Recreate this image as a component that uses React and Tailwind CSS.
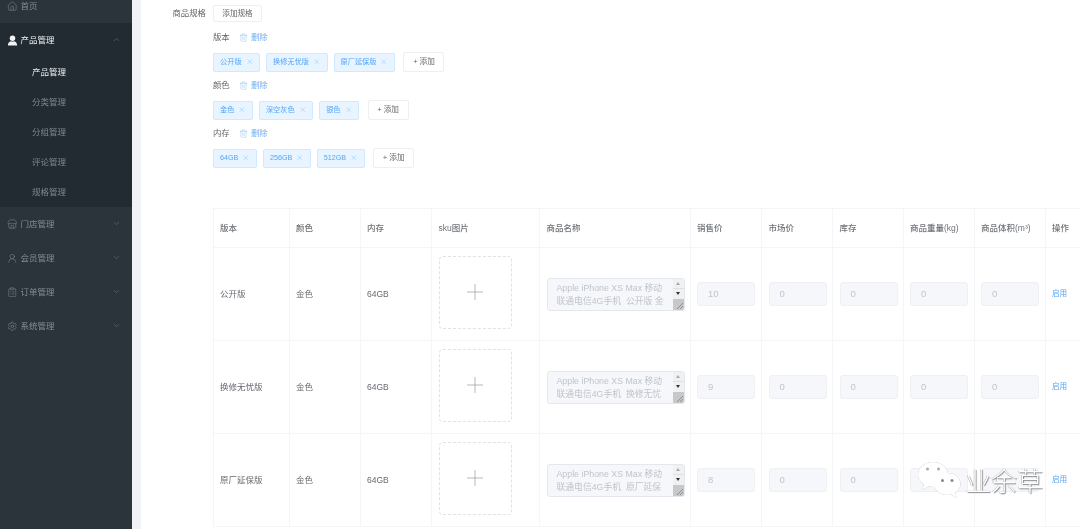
import React from "react";
import { Home, Store, UserRound, ClipboardList, Settings, ChevronUp, ChevronDown, Trash2, X, Plus } from "lucide-react";

const font = { fontFamily: '"Liberation Sans", "Noto Sans CJK SC", sans-serif' };

function MenuItem({ icon: Icon, label, noArrow }) {
  return (
    <div className="flex h-[34px] items-center pl-[5px] pr-[11px] text-[#868d93]">
      <div className="flex w-[15px] justify-center">
        <Icon size={10.5} strokeWidth={1.2} />
      </div>
      <span className="ml-[0.5px] text-[8.5px]">{label}</span>
      {!noArrow && <ChevronDown size={9} strokeWidth={1.1} className="ml-auto -translate-y-[1px]" />}
    </div>
  );
}

function SolidUser({ size }) {
  return (
    <svg width={size} height={size} viewBox="0 0 10 10" fill="#f0f2f3">
      <circle cx="5" cy="2.900" r="2.500" />
      <path d="M.8 9.600c0-2.600 1.400-3.800 2.600-4 .9.500 2.300.500 3.200 0 1.200.2 2.600 1.400 2.600 4z" />
    </svg>
  );
}

function Tag({ children }) {
  return (
    <span className="flex h-[19px] items-center gap-[4px] rounded-[2px] border border-[#d1e9ff] bg-[#e8f4ff] px-[6px] text-[7.2px] text-[#55a6f6]">
      {children}
      <X size={7.5} strokeWidth={1.2} className="text-[#6fb4f6]" />
    </span>
  );
}

function Group({ name, tags }) {
  return (
    <div className="flex flex-col">
      <div className="flex h-[16px] items-center text-[8.4px]">
        <span className="w-[26px] text-[#5f6368]">{name}</span>
        <Trash2 size={9} strokeWidth={1} className="text-[#6aaef3]" />
        <span className="ml-[3px] text-[#6aaef3]">删除</span>
      </div>
      <div className="mt-[7px] flex items-center">
        <div className="flex gap-[6px]">
          {tags.map((t) => (
            <Tag key={t}>{t}</Tag>
          ))}
        </div>
        <button className="ml-[8.5px] flex h-[20px] w-[41px] items-center justify-center gap-[2px] rounded-[2px] border border-[#eeeff2] bg-white text-[7.6px] text-[#666]">
          <span>+</span>
          <span>添加</span>
        </button>
      </div>
    </div>
  );
}

function Disabled({ value }) {
  return (
    <div className="flex h-[24px] w-[58px] items-center rounded-[3px] border border-[#eef0f4] bg-[#f5f7fa] pl-[10px] text-[9.5px] text-[#c0c4cc]">
      {value}
    </div>
  );
}

function NameBox({ tail }) {
  return (
    <div className="flex h-[33px] w-[138px] overflow-hidden rounded-[3px] border border-[#e4e7ed] bg-[#f5f7fa] text-[8.8px] leading-[13px] text-[#c0c4cc]">
      <div className="flex-1 whitespace-nowrap pl-[9px] pt-[3px]">
        <div>Apple iPhone XS Max 移动</div>
        <div>联通电信4G手机&nbsp; {tail}</div>
      </div>
      <div className="flex w-[11px] flex-col items-center bg-[#f0f1f3]">
        <div className="mt-[3px] h-0 w-0 border-x-[2.5px] border-b-[3px] border-x-transparent border-b-[#a8a8a8]" />
        <div className="mt-[3px] h-px w-full bg-[#e0e0e0]" />
        <div className="mt-[3px] h-0 w-0 border-x-[2.5px] border-t-[3px] border-x-transparent border-t-[#333]" />
        <div className="relative mt-auto h-[11px] w-full bg-[#c8c8c8]">
          <svg width="11" height="11" viewBox="0 0 11 11" className="absolute inset-0" stroke="#777" strokeWidth="0.7">
            <path d="M4 10l6-6M7 10l3-3" />
          </svg>
        </div>
      </div>
    </div>
  );
}

const th = "border border-[#f4f5f9] px-[6.5px] text-left align-middle font-medium";
const td = "border border-[#f4f5f9] px-[6.5px] align-middle";

function Row({ edition, sale, tail }) {
  return (
    <tr className="h-[93px] text-[8.5px] text-[#666a70]">
      <td className={td}>{edition}</td>
      <td className={td}>金色</td>
      <td className={td}>64GB</td>
      <td className={td}>
        <div className="mb-[4px] flex h-[73px] w-[73px] items-center justify-center rounded-[4px] border border-dashed border-[#e2e2e2]">
          <Plus size={26} strokeWidth={0.6} className="text-[#8c939d]" />
        </div>
      </td>
      <td className={td}>
        <NameBox tail={tail} />
      </td>
      <td className={td}><Disabled value={sale} /></td>
      <td className={td}><Disabled value="0" /></td>
      <td className={td}><Disabled value="0" /></td>
      <td className={td}><Disabled value="0" /></td>
      <td className={td}><Disabled value="0" /></td>
      <td className={`${td} text-[7.6px] text-[#55a6f6]`}>启用</td>
    </tr>
  );
}

function Watermark() {
  return (
    <div className="pointer-events-none absolute left-[918px] top-[460px] flex items-center">
      <svg width="44" height="40" viewBox="0 0 44 40">
        <g style={{ filter: "drop-shadow(0.5px 0.7px 0.5px #999)" }}>
          <path d="M15 2C6.700 2 0 7.600 0 14.500c0 4 2.200 7.400 5.700 9.700L4.500 30l6.200-3.500c1.400.3 2.800.5 4.300.5 8.300 0 15-5.600 15-12.500S23.300 2 15 2z" fill="#fff" />
          <path d="M29.500 13C22.500 13 16 17.700 16 24s6.500 11 13.500 11c1.300 0 2.500-.2 3.700-.5l5.300 3.500-1.200-5.400c3.300-2 5.200-5.100 5.200-8.600 0-6.300-5.500-11-13-11z" fill="#fff" />
        </g>
        <circle cx="9.500" cy="9" r="1.500" fill="#aaa" />
        <circle cx="20.500" cy="9" r="1.500" fill="#aaa" />
        <circle cx="24.500" cy="20.500" r="1.500" fill="#888" />
        <circle cx="34" cy="20.500" r="1.500" fill="#888" />
      </svg>
      <span
        className="ml-[3px] text-[26px] font-light leading-none text-white"
        style={{ fontFamily: '"Noto Sans CJK SC", sans-serif', textShadow: "1px 1px 1px #888, -0.5px 0 0.5px #aaa" }}
      >
        业余草
      </span>
    </div>
  );
}

export default function App() {
  return (
    <div className="relative flex h-[529px] w-[1080px] overflow-hidden bg-white blur-[0.5px]" style={font}>
      <aside className="w-[132px] shrink-0 overflow-hidden bg-[#2b343b]">
        <div className="-mt-[11px]">
          <MenuItem icon={Home} label="首页" noArrow />
          <div className="bg-[#222b32]">
            <div className="flex h-[34px] items-center pl-[5px] pr-[11px] text-[#eef0f1]">
              <div className="flex w-[15px] justify-center">
                <SolidUser size={11} />
              </div>
              <span className="ml-[0.5px] text-[8.5px]">产品管理</span>
              <ChevronUp size={9} strokeWidth={1.1} className="ml-auto -translate-y-[1px] text-[#868d93]" />
            </div>
            {["产品管理", "分类管理", "分组管理", "评论管理", "规格管理"].map((s, i) => (
              <div key={s} className={`flex h-[30px] items-center pl-[32px] text-[8.5px] ${i === 0 ? "text-[#eef0f1]" : "text-[#7f878d]"}`}>
                {s}
              </div>
            ))}
          </div>
          <MenuItem icon={Store} label="门店管理" />
          <MenuItem icon={UserRound} label="会员管理" />
          <MenuItem icon={ClipboardList} label="订单管理" />
          <MenuItem icon={Settings} label="系统管理" />
        </div>
      </aside>
      <div className="w-[9px] shrink-0 bg-[#f0f2f5]" />
      <main className="min-w-0 flex-1 overflow-hidden pt-[5px]">
        <div className="flex items-center">
          <span className="w-[65px] text-right text-[8.4px] text-[#5f6368]">商品规格</span>
          <button className="ml-[7px] h-[17px] w-[49px] rounded-[2px] border border-[#eeeff2] bg-white text-[7.6px] text-[#666]">添加规格</button>
        </div>
        <div className="ml-[72px] mt-[7px] flex flex-col gap-[5px]">
          <Group name="版本" tags={["公开版", "换修无忧版", "原厂延保版"]} />
          <Group name="颜色" tags={["金色", "深空灰色", "银色"]} />
          <Group name="内存" tags={["64GB", "256GB", "512GB"]} />
        </div>
        <table className="ml-[71.5px] mt-[40px] w-[892px] table-fixed border-collapse">
          <colgroup>
            <col className="w-[76px]" />
            <col className="w-[71px]" />
            <col className="w-[71.500px]" />
            <col className="w-[108px]" />
            <col className="w-[150.500px]" />
            <col className="w-[71.500px]" />
            <col className="w-[71px]" />
            <col className="w-[70.500px]" />
            <col className="w-[71px]" />
            <col className="w-[71px]" />
            <col className="w-[60px]" />
          </colgroup>
          <thead>
            <tr className="h-[39px] text-[8.5px] text-[#6f7378]">
              {["版本", "颜色", "内存", "sku图片", "商品名称", "销售价", "市场价", "库存", "商品重量(kg)", "商品体积(m³)", "操作"].map((h) => (
                <th key={h} className={th}>{h}</th>
              ))}
            </tr>
          </thead>
          <tbody>
            <Row edition="公开版" sale="10" tail="公开版 金" />
            <Row edition="换修无忧版" sale="9" tail="换修无忧" />
            <Row edition="原厂延保版" sale="8" tail="原厂延保" />
          </tbody>
        </table>
      </main>
      <Watermark />
    </div>
  );
}
